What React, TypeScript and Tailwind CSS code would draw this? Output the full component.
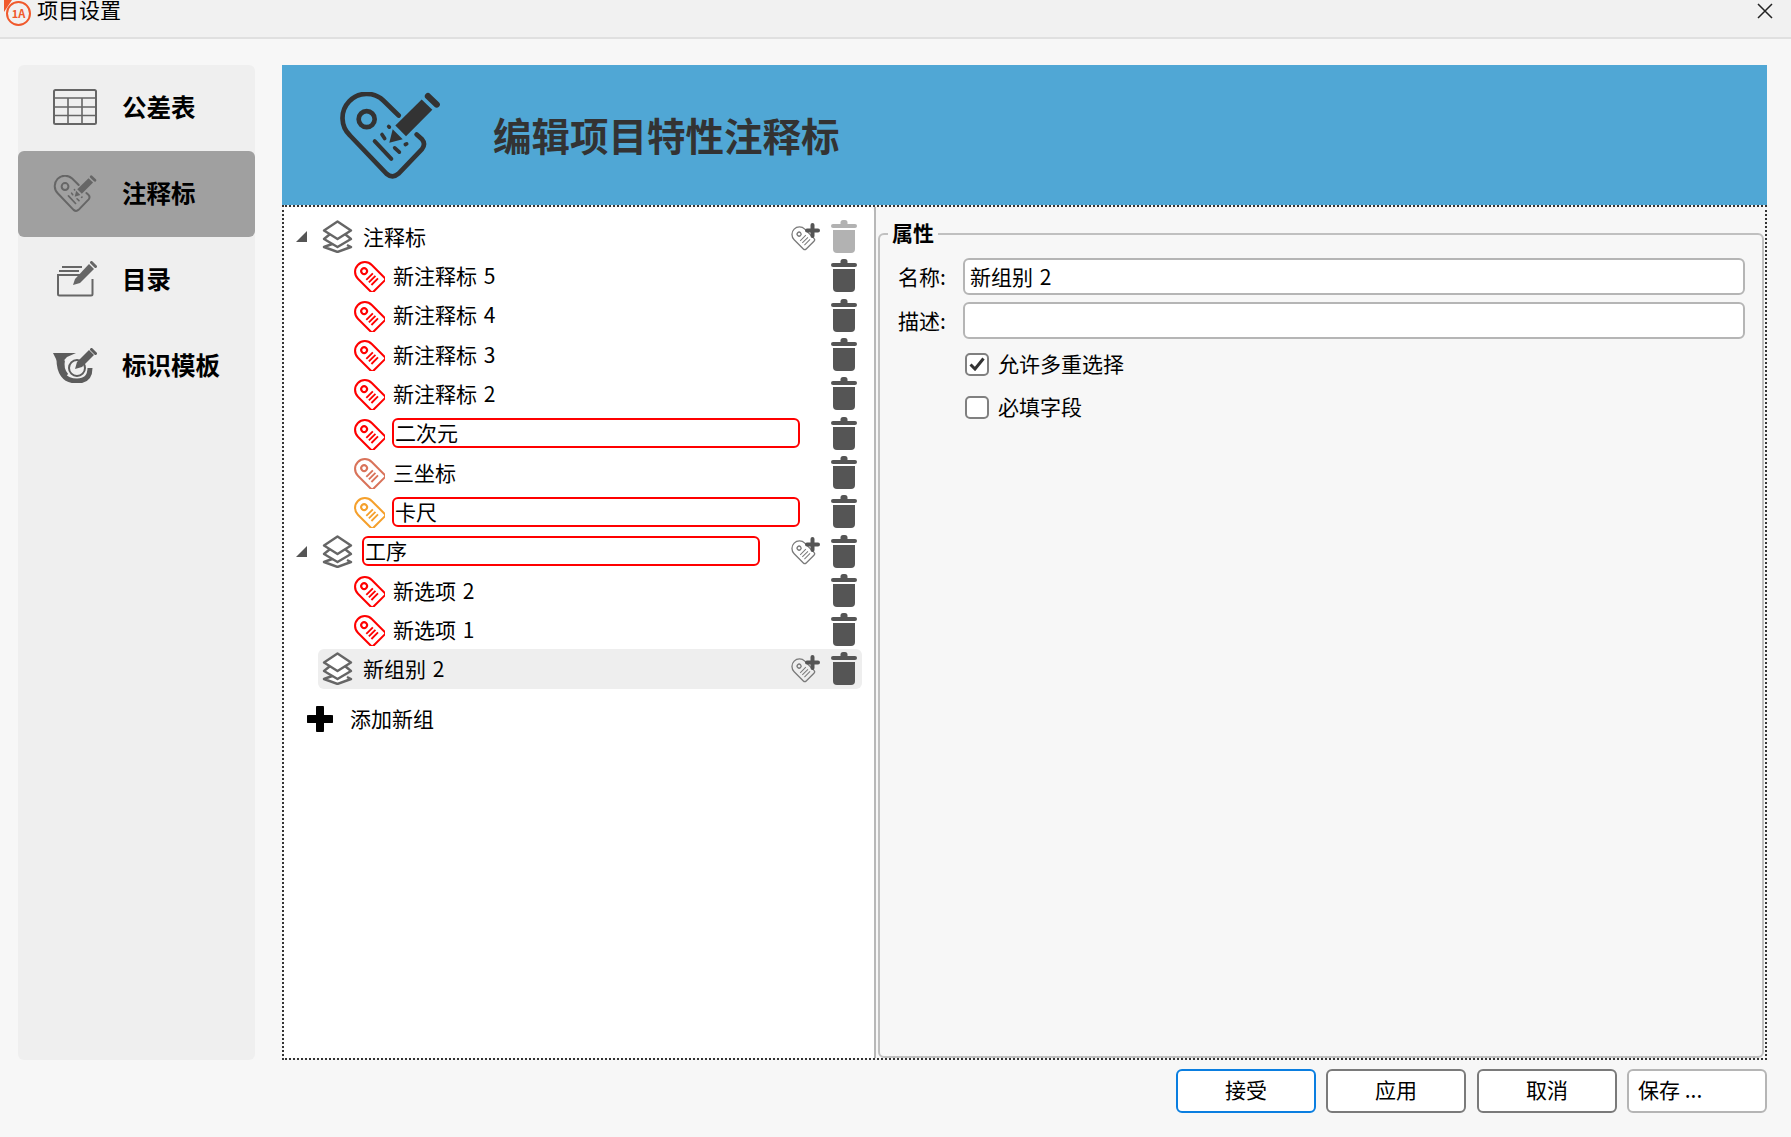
import React from "react";

const FONT = "font-['Noto_Sans_CJK_SC','Noto_Sans',sans-serif]";

function Tag({ color }: { color: string }) {
  return (
    <svg width="33" height="33" viewBox="0 0 32 32" className="shrink-0">
      <g transform="rotate(-45 16 16)" fill="none" stroke={color} strokeWidth="2" strokeLinecap="butt">
        <path d="M6.5 11 A9.5 9.5 0 0 1 25.5 11 V28.5 Q25.5 30.5 23.5 30.5 H8.5 Q6.5 30.5 6.5 28.5 Z" strokeLinejoin="round" />
        <circle cx="16" cy="10" r="2.8" />
        <path d="M11.5 17.5 H20.5 M11.5 21 H20.5 M11.5 24.5 H20.5" strokeWidth="1.8" />
      </g>
    </svg>
  );
}

function AddTag() {
  return (
    <svg width="30" height="28" viewBox="0 0 30 28" className="shrink-0">
      <g transform="rotate(-45 13 15)" fill="none" stroke="#7a7a7a" strokeWidth="1.3">
        <path d="M5.5 10 A7.5 7.5 0 0 1 20.5 10 V23 Q20.5 25 18.5 25 H7.5 Q5.5 25 5.5 23 Z" />
        <circle cx="13" cy="9.5" r="2" />
        <path d="M9 15 H17 M9 18 H17 M9 21 H17" strokeWidth="1" />
      </g>
      <path d="M22.5 2 V13 M17 7.5 H28" stroke="#555" strokeWidth="4" strokeLinecap="round" />
    </svg>
  );
}

function Trash({ light }: { light?: boolean }) {
  const c = light ? "#b2b2b2" : "#555555";
  return (
    <svg width="26" height="33" viewBox="0 0 26 33" className="shrink-0">
      <rect x="9.5" y="0" width="7" height="6" rx="2.5" fill={c} />
      <rect x="0" y="4" width="26" height="4" rx="2" fill={c} />
      <path d="M2 10 H24 V29 Q24 33 20 33 H6 Q2 33 2 29 Z" fill={c} />
    </svg>
  );
}

function Layers() {
  return (
    <svg width="31" height="33" viewBox="0 0 31 33" className="shrink-0" fill="none" stroke="#666" strokeWidth="2.4" strokeLinejoin="round">
      <path d="M15.5 22 L2 27 L15.5 32 L29 27 L25 25" fill="#fff" />
      <path d="M15.5 8 L2 19 L15.5 27 L29 19 Z" fill="#fff" />
      <path d="M15.5 1.5 L2 10.5 L15.5 19 L29 10.5 Z" fill="#fff" />
    </svg>
  );
}

function Arrow() {
  return (
    <svg width="11" height="11" viewBox="0 0 11 11" className="-ml-[1px] shrink-0">
      <polygon points="0,11 11,0 11,11" fill="#555" />
    </svg>
  );
}

function EditTag({ color, className }: { color: string; className: string }) {
  return (
    <svg viewBox="60 65 300 260" className={className}>
      <g fill="none" stroke={color} strokeWidth="14" strokeLinecap="round" strokeLinejoin="round">
        <path d="M236 135 L190 90 A65 65 0 0 0 90 195 L200 310 Q218 325 235 310 L306 236 Q318 220 306 206 L290 192" />
        <circle cx="140" cy="146" r="24" />
        <path d="M164 212 L214 265" strokeWidth="12" />
        <path d="M186 192 L194 204 M224 232 L238 245 M206 168 L208 170 M256 222 L260 220" strokeWidth="11" />
      </g>
      <polygon points="226,165 305,87 337,118 258,197" fill={color} />
      <polygon points="218,176 248,206 208,217" fill={color} />
      <path d="M324 77 L350 102" stroke={color} strokeWidth="19" strokeLinecap="round" />
    </svg>
  );
}

function TableIcon() {
  return (
    <svg width="44" height="36" viewBox="0 0 44 36" fill="none" stroke="#666" strokeWidth="1.6">
      <rect x="1" y="1" width="42" height="34" rx="1.5" strokeWidth="2" />
      <path d="M1 9 H43 M1 18 H43 M1 26.5 H43 M15 9 V35 M29 9 V35" />
    </svg>
  );
}

function FolderIcon() {
  return (
    <svg width="44" height="36" viewBox="0 0 44 36" fill="none">
      <path d="M6 10 H26 M9 6 H29" stroke="#666" strokeWidth="2" />
      <path d="M30 14 H5 V33 Q5 34.5 6.5 34.5 H38 Q39.5 34.5 39.5 33 V18" stroke="#666" strokeWidth="2" />
      <polygon points="22,18 36,3 41,8 27,22 20,24" fill="#666" />
      <path d="M38.5 1.5 L42.5 5.5" stroke="#666" strokeWidth="3" strokeLinecap="round" />
    </svg>
  );
}

function MarkIcon() {
  return (
    <svg width="44" height="35" viewBox="0 0 44 35">
      <path d="M0 5 H23 L14 9 Q7 15 9 24 L11 27 Z" fill="#5c5c5c" />
      <path d="M6 8 Q5 33 24 33 Q37 33 37 20" fill="none" stroke="#5c5c5c" strokeWidth="5" />
      <path d="M9 12 Q7 22 13 28" fill="none" stroke="#5c5c5c" strokeWidth="6" />
      <circle cx="24" cy="20" r="8" fill="none" stroke="#5c5c5c" strokeWidth="2" />
      <polygon points="24,14 36,2 41,7 29,19 22,21" fill="#5c5c5c" />
      <path d="M38.5 1.5 L42.5 5.5" stroke="#5c5c5c" strokeWidth="3" strokeLinecap="round" />
    </svg>
  );
}

function SideItem({ icon, label, active }: { icon: React.ReactNode; label: string; active?: boolean }) {
  return (
    <div className={`flex h-[86px] items-center rounded-md pb-[2px] ${active ? "bg-[#a0a0a0]" : ""}`}>
      <div className="flex w-[104px] shrink-0 pl-[35px]">{icon}</div>
      <span className="text-[24.5px] font-bold text-black">{label}</span>
    </div>
  );
}

const TEXT = "text-[21px] text-black [word-spacing:2px]";

function ChildRow({ label, color = "#ff0000", boxed }: { label: string; color?: string; boxed?: boolean }) {
  return (
    <div className="flex h-[39.3px] items-center pl-[68px] pr-[12px]">
      <Tag color={color} />
      {boxed ? (
        <div className={`ml-[7px] flex h-[30px] w-[408px] shrink-0 items-center rounded-md border-2 border-[#ff0000] pl-[1px] ${TEXT}`}>{label}</div>
      ) : (
        <span className={`ml-[8px] ${TEXT}`}>{label}</span>
      )}
      <div className="ml-auto mr-[5px]">
        <Trash />
      </div>
    </div>
  );
}

function GroupRow({ label, arrow, boxed, selected, light }: { label: string; arrow?: boolean; boxed?: boolean; selected?: boolean; light?: boolean }) {
  return (
    <div className="flex h-[39.3px] items-center pl-[13px] pr-[12px]">
      <div className="flex w-[21px] shrink-0 items-center">{arrow && <Arrow />}</div>
      <div className={`flex h-full flex-1 items-center rounded-md pl-[4px] pr-[5px] ${selected ? "bg-[#eeeeee]" : ""}`}>
        <Layers />
        {boxed ? (
          <div className={`ml-[9px] flex h-[30px] w-[398px] shrink-0 items-center rounded-md border-2 border-[#ff0000] pl-[1px] ${TEXT}`}>{label}</div>
        ) : (
          <span className={`ml-[10px] ${TEXT}`}>{label}</span>
        )}
        <div className="ml-auto mr-[11px]">
          <AddTag />
        </div>
        <Trash light={light} />
      </div>
    </div>
  );
}

function Check({ checked, label }: { checked?: boolean; label: string }) {
  return (
    <div className="ml-[67px] flex h-[24px] items-center">
      <div className="flex h-[23px] w-[24px] shrink-0 items-center justify-center rounded-[5px] border-2 border-[#808080] bg-white">
        {checked && (
          <svg width="16" height="14" viewBox="0 0 16 14" fill="none">
            <path d="M1.5 7.5 L6 12 L14.5 1.5" stroke="#333" strokeWidth="3" />
          </svg>
        )}
      </div>
      <span className="ml-[9px] text-[21px] text-black">{label}</span>
    </div>
  );
}

function Field({ label, value }: { label: string; value?: string }) {
  return (
    <div className="flex items-center">
      <span className="w-[65px] shrink-0 text-[21px] text-black">{label}</span>
      <div className={`flex h-[37px] w-[782px] items-center rounded-md border-2 border-[#b5b5b5] bg-white pl-[5px] ${TEXT}`}>{value}</div>
    </div>
  );
}

function Btn({ label, border, left }: { label: string; border: string; left?: boolean }) {
  return (
    <button className={`flex h-[44px] w-[140px] items-center rounded-md border-2 bg-white pb-[2px] text-[21px] text-black ${border} ${left ? "justify-start pl-[9px]" : "justify-center"}`}>
      {label}
    </button>
  );
}

export default function App() {
  return (
    <div className={`flex h-[1137px] w-[1791px] flex-col overflow-hidden bg-[#f7f7f7] ${FONT}`}>
      <div className="flex h-[39px] shrink-0 items-start border-b-2 border-[#e0e0e0] bg-[#f1f1f1]">
        <div className="relative ml-[6px] mt-[1px] flex h-[25px] w-[25px] shrink-0 items-center justify-center rounded-full border-[2.5px] border-[#f0592c] text-[11px] font-bold leading-none text-[#f0592c]">
          1A
          <div className="absolute -left-[4px] -top-[3px] h-0 w-0 border-r-[8px] border-t-[12px] border-r-transparent border-t-[#f0592c]" />
        </div>
        <span className="-mt-[5px] ml-[6px] text-[21px] leading-[28px] text-black">项目设置</span>
        <svg width="16" height="16" viewBox="0 0 16 16" className="ml-auto mr-[18px] mt-[3px]" fill="none" stroke="#222" strokeWidth="1.5">
          <path d="M1 1 L15 15 M15 1 L1 15" />
        </svg>
      </div>

      <div className="flex flex-1 pl-[18px] pt-[26px]">
        <div className="h-[995px] w-[237px] shrink-0 rounded-md bg-[#efefef]">
          <SideItem icon={<TableIcon />} label="公差表" />
          <SideItem icon={<EditTag color="#666666" className="h-[37px] w-[44px] shrink-0" />} label="注释标" active />
          <SideItem icon={<FolderIcon />} label="目录" />
          <SideItem icon={<MarkIcon />} label="标识模板" />
        </div>

        <div className="ml-[27px] w-[1485px] shrink-0">
          <div className="flex h-[140px] items-center bg-[#50a7d5] pl-[58px] text-[#333333]">
            <EditTag color="#333333" className="h-[87px] w-[100px] shrink-0" />
            <span className="ml-[53px] text-[38.5px] font-bold">编辑项目特性注释标</span>
          </div>

          <div className="flex h-[855px] border-2 border-dotted border-[#333333]">
            <div className="w-[590px] shrink-0 rounded-tr-md bg-white pt-[10px]">
              <GroupRow label="注释标" arrow light />
              <ChildRow label="新注释标 5" />
              <ChildRow label="新注释标 4" />
              <ChildRow label="新注释标 3" />
              <ChildRow label="新注释标 2" />
              <ChildRow label="二次元" boxed />
              <ChildRow label="三坐标" color="#d9735a" />
              <ChildRow label="卡尺" color="#f5a02c" boxed />
              <GroupRow label="工序" arrow boxed />
              <ChildRow label="新选项 2" />
              <ChildRow label="新选项 1" />
              <GroupRow label="新组别 2" selected />
              <div className="ml-[23px] mt-[10px] flex h-[40px] items-center">
                <svg width="26" height="26" viewBox="0 0 26 26" className="shrink-0">
                  <path d="M13 2 V24 M2 13 H24" stroke="#000" strokeWidth="8" strokeLinecap="round" />
                </svg>
                <span className="ml-[17px] text-[21px] text-black">添加新组</span>
              </div>
            </div>
            <div className="w-[2px] shrink-0 bg-[#b8b8b8]" />
            <div className="flex-1 bg-[#f7f7f7] pl-[2px] pr-[1px] pt-[26px]">
              <div className="relative h-[825px] rounded-md border-2 border-[#c0c0c0] pl-[18px] pt-[23px]">
                <span className="absolute -top-[18px] left-[8px] bg-[#f7f7f7] px-[4px] text-[21px] font-bold leading-[30px] text-black">属性</span>
                <div className="flex flex-col gap-[7px]">
                  <Field label="名称:" value="新组别 2" />
                  <Field label="描述:" />
                </div>
                <div className="mt-[13px] flex flex-col gap-[19px]">
                  <Check checked label="允许多重选择" />
                  <Check label="必填字段" />
                </div>
              </div>
            </div>
          </div>

          <div className="mt-[9px] flex justify-end">
            <Btn label="接受" border="border-[#0a7ee0]" />
            <div className="ml-[10px]">
              <Btn label="应用" border="border-[#7a7a7a]" />
            </div>
            <div className="ml-[11px]">
              <Btn label="取消" border="border-[#7a7a7a]" />
            </div>
            <div className="ml-[10px]">
              <Btn label="保存 ..." border="border-[#b5b5b5]" left />
            </div>
          </div>
        </div>
      </div>
    </div>
  );
}
